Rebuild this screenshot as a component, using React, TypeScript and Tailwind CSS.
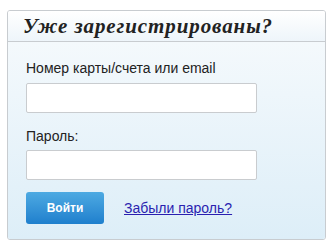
import React from "react";

const sans = { fontFamily: '"Liberation Sans", Arial, sans-serif' };

export default function App() {
  return (
    <div className="w-[332px] h-[246px] bg-white pt-[10px] pl-[7px]" style={sans}>
      <div className="w-[319px] h-[230px] flex flex-col border border-[#c8ccd0] rounded-[3px] overflow-hidden">
        <div className="h-[31px] shrink-0 border-b border-[#c8ccd0] bg-gradient-to-b from-white to-[#eef5fa] pl-[15px] flex items-center">
          <h2 className="text-[21px] leading-none tracking-[0.9px] font-bold italic text-[#222] font-['Liberation_Serif',Georgia,serif]">
            Уже зарегистрированы?
          </h2>
        </div>
        <div className="flex-1 bg-gradient-to-b from-[#f4f9fc] to-[#ddeef8] px-[18px] pt-[17px]">
          <label className="block text-[14px] leading-[18px] text-[#222]">Номер карты/счета или email</label>
          <input
            type="text"
            className="mt-[6px] block w-[231px] h-[30px] bg-white border border-[#c9cccf] rounded-[2px] outline-none"
          />
          <label className="mt-[14px] block text-[14px] leading-[18px] text-[#222]">Пароль:</label>
          <input
            type="password"
            className="mt-[5px] block w-[231px] h-[30px] bg-white border border-[#c9cccf] rounded-[2px] outline-none"
          />
          <div className="mt-[12px] flex items-center">
            <button
              type="button"
              className="w-[78px] h-[32px] rounded-[3px] bg-gradient-to-b from-[#4daae2] to-[#1e7fcd] text-white text-[12px] font-bold"
            >
              Войти
            </button>
            <a href="#" className="ml-[20px] text-[14px] text-[#2a1fb0] underline">
              Забыли пароль?
            </a>
          </div>
        </div>
      </div>
    </div>
  );
}
